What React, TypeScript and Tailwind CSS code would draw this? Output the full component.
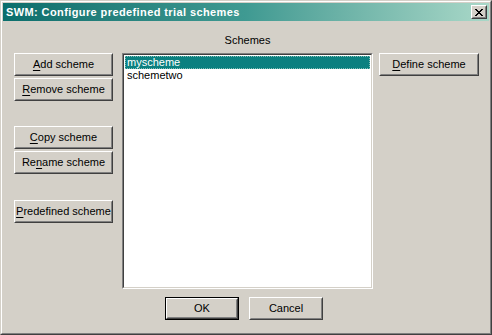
import React from 'react';

const raised =
  'border border-t-white border-l-white border-r-[#404040] border-b-[#404040]';
const raisedInner =
  'border border-t-[#d4d0c8] border-l-[#d4d0c8] border-r-[#808080] border-b-[#808080]';

interface BtnProps {
  label: React.ReactNode;
  className?: string;
  isDefault?: boolean;
}

const Button: React.FC<BtnProps> = ({ label, className = '', isDefault }) => {
  const face = (
    <div className={`${raised} h-full w-full`}>
      <div className={`${raisedInner} h-full w-full flex items-center justify-center bg-[#d4d0c8] text-black whitespace-nowrap`}>
        {label}
      </div>
    </div>
  );
  if (isDefault) {
    return <div className={`border border-black ${className}`}>{face}</div>;
  }
  return <div className={className}>{face}</div>;
};

const U: React.FC<{ children: React.ReactNode }> = ({ children }) => (
  <span className="underline underline-offset-[2px]">{children}</span>
);

export default function App() {
  return (
    <div
      className="w-[492px] h-[335px] bg-[#d4d0c8] text-[11px] leading-[13px] text-black select-none"
      style={{ fontFamily: '"Liberation Sans", Arial, sans-serif' }}
    >
      <div className="w-full h-full border border-t-[#d4d0c8] border-l-[#d4d0c8] border-r-[#404040] border-b-[#404040]">
        <div className="w-full h-full border border-t-white border-l-white border-r-[#808080] border-b-[#808080] p-px flex flex-col">
          {/* title bar */}
          <div className="h-[18px] flex items-center justify-between pl-[3px] pr-[2px] bg-gradient-to-r from-[#0a6e6c] via-[#3f9a92] to-[#a9d8c8]">
            <span className="text-white font-bold text-[11px] tracking-[0.4px]">
              SWM: Configure predefined trial schemes
            </span>
            <div className="w-[16px] h-[14px]">
              <div className={`${raised} h-full w-full`}>
                <div className={`${raisedInner} h-full w-full flex items-center justify-center bg-[#d4d0c8]`}>
                  <svg width="8" height="7" viewBox="0 0 8 7" shapeRendering="crispEdges">
                    <path
                      d="M0 0h2v1h-2zM6 0h2v1h-2zM1 1h2v1h-2zM5 1h2v1h-2zM2 2h4v1h-4zM3 3h2v1h-2zM2 4h4v1h-4zM1 5h2v1h-2zM5 5h2v1h-2zM0 6h2v1h-2zM6 6h2v1h-2z"
                      fill="#000"
                    />
                  </svg>
                </div>
              </div>
            </div>
          </div>

          {/* body */}
          <div className="flex pl-[11px] pt-[13px]">
            {/* left buttons */}
            <div className="flex flex-col w-[99px] mt-[19px]">
              <Button className="h-[23px]" label={<span><U>A</U>dd scheme</span>} />
              <Button className="h-[23px] mt-[2px]" label={<span><U>R</U>emove scheme</span>} />
              <Button className="h-[23px] mt-[25px]" label={<span><U>C</U>opy scheme</span>} />
              <Button className="h-[23px] mt-[2px]" label={<span>Re<U>n</U>ame scheme</span>} />
              <Button className="h-[23px] mt-[26px]" label={<span><U>P</U>redefined scheme</span>} />
            </div>

            {/* center list */}
            <div className="flex flex-col w-[251px] ml-[9px]">
              <div className="h-[13px] mb-[6px] text-center">Schemes</div>
              <div className="h-[236px] border border-t-[#808080] border-l-[#808080] border-r-white border-b-white">
                <div className="h-full w-full border border-t-[#404040] border-l-[#404040] border-r-[#d4d0c8] border-b-[#d4d0c8] bg-white px-px pt-px">
                  <div className="h-[13px] bg-[#0b8080] text-white pl-[2px] outline outline-1 outline-dotted outline-[#7fc0b8] -outline-offset-1">
                    myscheme
                  </div>
                  <div className="h-[13px] pl-[2px]">schemetwo</div>
                </div>
              </div>
              <div className="flex justify-center gap-[10px] mt-[8px] pr-[7px]">
                <Button isDefault className="w-[74px] h-[23px]" label="OK" />
                <Button className="w-[74px] h-[23px]" label="Cancel" />
              </div>
            </div>

            {/* right */}
            <div className="flex flex-col w-[100px] ml-[6px] mt-[19px]">
              <Button className="h-[23px]" label={<span><U>D</U>efine scheme</span>} />
            </div>
          </div>
        </div>
      </div>
    </div>
  );
}
